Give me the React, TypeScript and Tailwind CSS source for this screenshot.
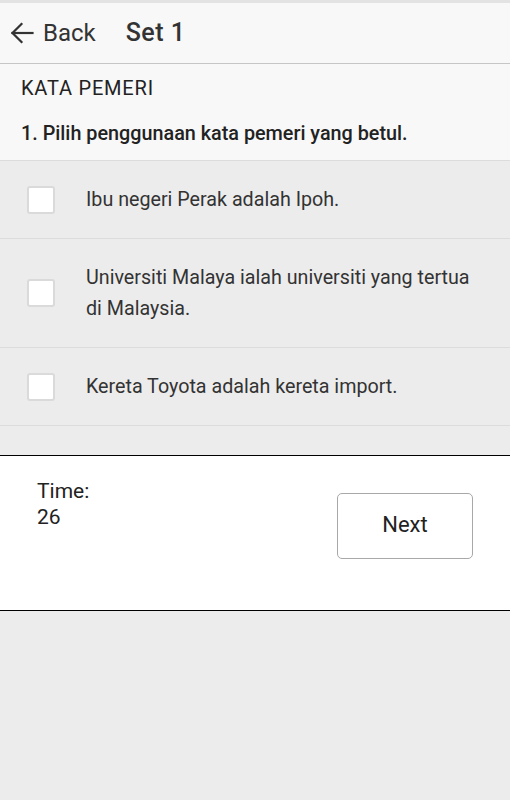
import { useState } from "react";

const pilihan = [
  "Ibu negeri Perak adalah Ipoh.",
  "Universiti Malaya ialah universiti yang tertua di Malaysia.",
  "Kereta Toyota adalah kereta import.",
];

function ArrowLeft() {
  return (
    <svg width="24" height="24" viewBox="0 0 24 24" fill="none" stroke="#333" strokeWidth="2.2" strokeLinecap="square">
      <path d="M22.5 12H2.5" />
      <path d="M11.5 3l-9 9 9 9" />
    </svg>
  );
}

export default function App() {
  const [dipilih, setDipilih] = useState<number[]>([]);

  const tukar = (i: number) =>
    setDipilih((d) => (d.includes(i) ? d.filter((x) => x !== i) : [...d, i]));

  return (
    <div className="min-h-[800px] bg-[#ececec] font-['Roboto',sans-serif] text-[#222]">
      <div className="h-[3px] bg-[#e3e3e3]" />
      <header className="flex h-[61px] items-center border-b border-[#c6c6c6] bg-[#f8f8f8] pl-[10px]">
        <button type="button" className="flex items-center gap-[9px] text-[24px] text-[#333]">
          <ArrowLeft />
          <span>Back</span>
        </button>
        <h1 className="ml-[30px] text-[25px] font-medium tracking-[0.5px] text-[#333]">Set 1</h1>
      </header>

      <section className="border-b border-[#dcdcdc] bg-[#f8f8f8] px-[21px] pt-[11px] pb-[13px]">
        <h2 className="text-[20px] leading-[26px] tracking-[0.8px]">KATA PEMERI</h2>
        <p className="mt-[20px] text-[19.8px] leading-[26px] font-medium">
          1. Pilih penggunaan kata pemeri yang betul.
        </p>
      </section>

      <ul className="pb-[29px]">
        {pilihan.map((teks, i) => (
          <li
            key={i}
            onClick={() => tukar(i)}
            className="flex items-center border-b border-[#dcdcdc] py-[23px] pr-[30px] pl-[27px]"
          >
            <span
              className={
                dipilih.includes(i)
                  ? "h-[28px] w-[28px] shrink-0 rounded-[3px] border-2 border-[#2196f3] bg-[#2196f3]"
                  : "h-[28px] w-[28px] shrink-0 rounded-[3px] border-2 border-[#dadada] bg-white"
              }
            />
            <span className="ml-[31px] text-[19.7px] leading-[31px] text-[#333]">{teks}</span>
          </li>
        ))}
      </ul>

      <footer className="flex items-start justify-between border-y border-black bg-white pt-[22px] pr-[37px] pb-[51px] pl-[37px]">
        <div className="text-[21px] leading-[26px]">
          <div>Time:</div>
          <div>26</div>
        </div>
        <button
          type="button"
          className="mt-[15px] h-[66px] w-[136px] rounded-[5px] border border-[#a8a8a8] bg-white pb-[4px] text-[22px] text-[#222]"
        >
          Next
        </button>
      </footer>
    </div>
  );
}
